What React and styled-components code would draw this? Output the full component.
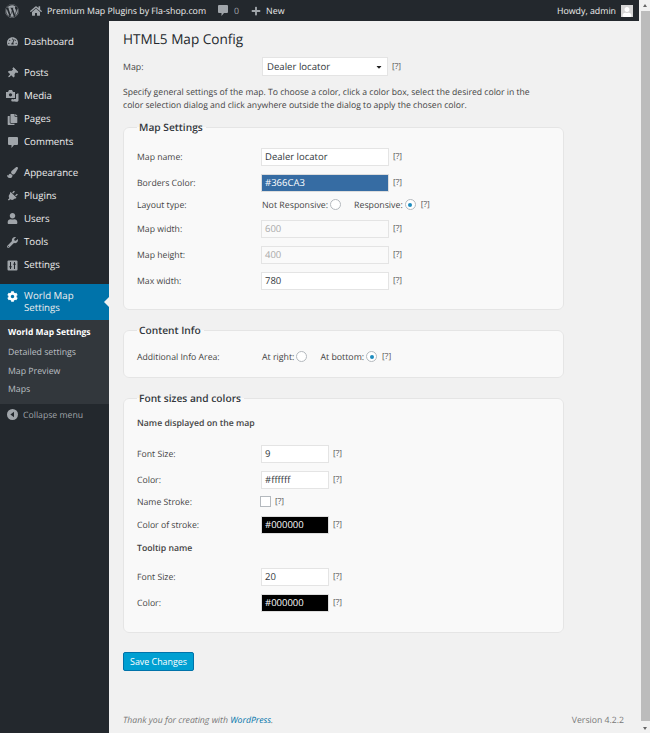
import React from 'react';
import styled, { createGlobalStyle } from 'styled-components';
import {
  FaWordpress,
  FaHome,
  FaPlus,
  FaTachometerAlt,
  FaThumbtack,
  FaCopy,
  FaPaintBrush,
  FaPlug,
  FaUser,
  FaWrench,
  FaCog,
  FaCaretDown,
} from 'react-icons/fa';

const GlobalStyle = createGlobalStyle`
  html, body {
    margin: 0;
    height: 733px;
    overflow: hidden;
    background: #f1f1f1;
  }
  * { box-sizing: border-box; }
  body {
    font-family: 'Open Sans', sans-serif;
    font-size: 9.5px;
    color: #444;
    text-rendering: geometricPrecision;
  }
`;

const Shell = styled.div`
  display: flex;
  width: 650px;
  height: 733px;
`;
const Page = styled.div`
  width: 639px;
  display: flex;
  flex-direction: column;
`;
const Scrollbar = styled.div`
  width: 11px;
  background: #f1f1f1;
  display: flex;
  flex-direction: column;
  align-items: center;
  padding: 4px 0 3px 1px;
`;
const ScrollArrow = styled.div`
  width: 0;
  height: 0;
  border-left: 2.5px solid transparent;
  border-right: 2.5px solid transparent;
  border-${(props) => (props.$down ? 'top' : 'bottom')}: 3px solid #666;
`;
const ScrollThumb = styled.div`
  flex: 1;
  width: 9px;
  margin: 4px 0 6px;
  background: #bcbcbc;
`;

const AdminBar = styled.header`
  height: 21px;
  background: #23282d;
  color: #eee;
  display: flex;
  align-items: center;
  padding: 0 6px 0 5px;
  font-size: 8.8px;
`;
const BarLogo = styled.span`
  display: flex;
  color: #a0a5aa;
  font-size: 14px;
  margin-right: 11px;
`;
const BarIcon = styled.span`
  display: flex;
  color: ${(props) => props.$color || '#a0a5aa'};
  font-size: ${(props) => props.$size || 11}px;
  margin-right: ${(props) => props.$gap || 5}px;
`;
const BarText = styled.span`
  color: ${(props) => props.$color || '#eee'};
  margin-right: ${(props) => props.$gap || 0}px;
`;
const BarRight = styled.div`
  margin-left: auto;
  display: flex;
  align-items: center;
  gap: 5px;
`;
const Avatar = styled.span`
  width: 12px;
  height: 12px;
  background: #d5d5d5;
  display: flex;
  align-items: flex-end;
  justify-content: center;
  color: #fff;
  font-size: 10px;
  overflow: hidden;
`;

const Body = styled.div`
  flex: 1;
  display: flex;
  min-height: 0;
`;
const Sidebar = styled.nav`
  width: 109px;
  background: #23282d;
  padding-top: 9px;
`;
const MenuGroup = styled.div`
  margin-bottom: ${(props) => props.$gap}px;
`;
const MenuItem = styled.div`
  position: relative;
  display: flex;
  align-items: ${(props) => (props.$active ? 'flex-start' : 'center')};
  height: ${(props) => (props.$active ? '36px' : '23.2px')};
  padding: ${(props) => (props.$active ? '6.5px 8px 0 6px' : '0 8px 0 6px')};
  background: ${(props) => (props.$active ? '#0073aa' : 'transparent')};
  color: #eee;
  font-size: 9.7px;
  line-height: 12px;
`;
const MenuIcon = styled.span`
  width: 13px;
  height: 12px;
  margin-right: 5px;
  flex: none;
  display: flex;
  align-items: center;
  justify-content: center;
  font-size: 11px;
  color: ${(props) => (props.$active ? '#fff' : '#a0a5aa')};
  transform: rotate(${(props) => props.$turn || 0}deg);
`;
const ActiveNotch = styled.span`
  position: absolute;
  right: 0;
  top: 13px;
  width: 0;
  height: 0;
  border-top: 5px solid transparent;
  border-bottom: 5px solid transparent;
  border-right: 5px solid #f1f1f1;
`;
const SubMenu = styled.div`
  background: #32373c;
  padding: 4.5px 0 5px;
`;
const SubItem = styled.div`
  height: 18.6px;
  line-height: 18.6px;
  padding-left: 8px;
  font-size: ${(props) => (props.$current ? 8.5 : 8.75)}px;
  font-weight: ${(props) => (props.$current ? 700 : 400)};
  color: ${(props) => (props.$current ? '#fff' : 'rgba(240, 245, 250, 0.72)')};
`;
const Collapse = styled.div`
  display: flex;
  align-items: center;
  gap: 5px;
  padding: 2px 0 0 7px;
  height: 20px;
  font-size: 8.7px;
  color: #a0a5aa;
`;

const Content = styled.main`
  flex: 1;
  display: flex;
  flex-direction: column;
  padding: 0 0 0 14px;
  min-width: 0;
`;
const Title = styled.h1`
  margin: 9px 0 0;
  font-size: 13.6px;
  line-height: 18px;
  font-weight: 400;
  color: #23282d;
`;
const MapRow = styled.div`
  display: flex;
  align-items: center;
  margin-top: 9px;
`;
const MapLabel = styled.span`
  width: 139px;
  font-size: 8.8px;
`;
const SelectBox = styled.div`
  width: 126px;
  height: 19px;
  background: #fff;
  border: 1px solid #e4e4e4;
  padding: 0 4px;
  display: flex;
  align-items: center;
  justify-content: space-between;
  font-size: 9.6px;
  color: #32373c;
`;
const Help = styled.span`
  margin-left: ${(props) => props.$gap || 4}px;
  font-size: 8.4px;
  color: #555;
`;
const Intro = styled.p`
  margin: 10px 0 0;
  width: 420px;
  line-height: 13.3px;
  font-size: 8.65px;
  color: #444;
`;
const Group = styled.fieldset`
  margin: ${(props) => props.$top}px 0 0;
  padding: ${(props) => props.$pad}px 14px 0 13px;
  width: 441px;
  height: ${(props) => props.$height}px;
  background: #f9f9f9;
  border: 1px solid #e5e5e5;
  border-radius: 6px;
`;
const GroupTitle = styled.legend`
  padding: 0 3px 0 2px;
  margin-left: 0;
  font-size: 10.2px;
  line-height: 13px;
  font-weight: 600;
  color: #32373c;
`;
const Row = styled.div`
  display: flex;
  align-items: center;
  height: ${(props) => props.$h || 26}px;
`;
const Label = styled.span`
  width: 124px;
  flex: none;
  font-size: 8.7px;
  color: #444;
`;
const Field = styled.div`
  width: ${(props) => (props.$small ? 68 : 128)}px;
  height: 18px;
  border: 1px solid ${(props) => (props.$swatch ? '#ddd' : '#e4e4e4')};
  background: ${(props) => props.$swatch || (props.$disabled ? '#fafafa' : '#fff')};
  color: ${(props) => (props.$swatch ? '#fff' : props.$disabled ? '#a9a9a9' : '#32373c')};
  font-size: 9.5px;
  line-height: 16px;
  padding-left: 3px;
  flex: none;
`;
const Choices = styled.div`
  display: flex;
  align-items: center;
  font-size: 8.8px;
  padding-left: 1px;
`;
const Choice = styled.span`
  display: flex;
  align-items: center;
  gap: 2px;
  margin-right: ${(props) => props.$gap || 0}px;
  color: #444;
`;
const Radio = styled.span`
  width: 11px;
  height: 11px;
  border-radius: 50%;
  border: 1px solid #b4b9be;
  background: #fff;
  display: flex;
  align-items: center;
  justify-content: center;
  &::after {
    content: '';
    width: 4px;
    height: 4px;
    border-radius: 50%;
    background: ${(props) => (props.$on ? '#1e8cbe' : 'transparent')};
  }
`;
const Checkbox = styled.span`
  width: 11px;
  height: 11px;
  margin-left: -1px;
  background: #fff;
  border: 1px solid #b4b9be;
  flex: none;
`;
const SubHeading = styled.div`
  font-size: 8.7px;
  font-weight: 600;
  color: #444;
  height: ${(props) => props.$h}px;
  line-height: 14px;
  padding-top: ${(props) => props.$pt || 0}px;
`;
const SaveButton = styled.button`
  align-self: flex-start;
  margin-top: 19px;
  width: 71px;
  height: 19px;
  padding: 0;
  font-family: inherit;
  font-size: 8.9px;
  color: #fff;
  background: #00a0d2;
  border: 1px solid #0073aa;
  border-radius: 2px;
`;
const Footer = styled.footer`
  margin-top: auto;
  display: flex;
  justify-content: space-between;
  padding: 0 15px 7px 0;
  font-size: 8.7px;
  line-height: 12px;
  color: #777;
`;
const Thanks = styled.span`
  font-style: italic;
`;
const FooterLink = styled.a`
  color: #0073aa;
`;

const SettingsGlyph = () => (
  <svg width="11" height="11" viewBox="0 0 11 11">
    <rect x="0.5" y="0.5" width="10" height="10" rx="1" fill="#a0a5aa" />
    <path d="M3.5 2v7M2.2 6.8h2.6M7.5 2v7M6.2 4.2h2.6" stroke="#23282d" strokeWidth="1" />
  </svg>
);

const CollapseGlyph = () => (
  <svg width="11" height="11" viewBox="0 0 11 11">
    <circle cx="5.5" cy="5.5" r="5.5" fill="#a0a5aa" />
    <path d="M7 2.8v5.4L3.4 5.5z" fill="#23282d" />
  </svg>
);

const MediaGlyph = () => (
  <svg width="13" height="12" viewBox="0 0 13 12">
    <path d="M0 2h2l1-2h3l1 2h2v6H0z" fill="#a0a5aa" />
    <circle cx="4.5" cy="4.8" r="1.6" fill="#23282d" />
    <path d="M6.5 11.5a1.3 1.3 0 1 1 1.3-1.3V9h3.2v1.4a1.3 1.3 0 1 1-1-1.3V4H11v-.5h1.5v7a1.4 1.4 0 0 1-2 .9" fill="#a0a5aa" />
  </svg>
);

const CommentGlyph = () => (
  <svg width="10" height="11" viewBox="0 0 10 11">
    <path d="M1 0h8a1 1 0 0 1 1 1v6a1 1 0 0 1-1 1H6l-2.5 3V8H1a1 1 0 0 1-1-1V1a1 1 0 0 1 1-1z" fill="#a0a5aa" />
  </svg>
);

const topGroups = [
  { gap: 8, items: [{ icon: <FaTachometerAlt />, label: 'Dashboard' }] },
  {
    gap: 7,
    items: [
      { icon: <FaThumbtack />, label: 'Posts', turn: 45 },
      { icon: <MediaGlyph />, label: 'Media' },
      { icon: <FaCopy />, label: 'Pages' },
      { icon: <CommentGlyph />, label: 'Comments' },
    ],
  },
  {
    gap: 7,
    items: [
      { icon: <FaPaintBrush />, label: 'Appearance' },
      { icon: <FaPlug />, label: 'Plugins', turn: 45 },
      { icon: <FaUser />, label: 'Users' },
      { icon: <FaWrench />, label: 'Tools' },
      { icon: <SettingsGlyph />, label: 'Settings' },
    ],
  },
];

const FieldRow = ({ label, value, small, swatch, disabled, h }) => (
  <Row $h={h}>
    <Label>{label}</Label>
    <Field $small={small} $swatch={swatch} $disabled={disabled}>
      {value}
    </Field>
    <Help>[?]</Help>
  </Row>
);

const App = () => {
  return (
    <Shell>
      <GlobalStyle />
      <Page>
        <AdminBar>
          <BarLogo>
            <FaWordpress />
          </BarLogo>
          <BarIcon $size={12}>
            <FaHome />
          </BarIcon>
          <BarText $gap={12}>Premium Map Plugins by Fla-shop.com</BarText>
          <BarIcon $gap={6}>
            <CommentGlyph />
          </BarIcon>
          <BarText $color="#a0a5aa" $gap={12}>
            0
          </BarText>
          <BarIcon $size={10} $gap={5}>
            <FaPlus />
          </BarIcon>
          <BarText>New</BarText>
          <BarRight>
            <BarText>Howdy, admin</BarText>
            <Avatar>
              <FaUser />
            </Avatar>
          </BarRight>
        </AdminBar>
        <Body>
          <Sidebar>
            {topGroups.map((group) => (
              <MenuGroup key={group.items[0].label} $gap={group.gap}>
                {group.items.map((item) => (
                  <MenuItem key={item.label}>
                    <MenuIcon $turn={item.turn}>{item.icon}</MenuIcon>
                    {item.label}
                  </MenuItem>
                ))}
              </MenuGroup>
            ))}
            <MenuItem $active>
              <MenuIcon $active>
                <FaCog />
              </MenuIcon>
              World Map
              <br />
              Settings
              <ActiveNotch />
            </MenuItem>
            <SubMenu>
              <SubItem $current>World Map Settings</SubItem>
              <SubItem>Detailed settings</SubItem>
              <SubItem>Map Preview</SubItem>
              <SubItem>Maps</SubItem>
            </SubMenu>
            <Collapse>
              <CollapseGlyph />
              Collapse menu
            </Collapse>
          </Sidebar>
          <Content>
            <Title>HTML5 Map Config</Title>
            <MapRow>
              <MapLabel>Map:</MapLabel>
              <SelectBox>
                Dealer locator
                <FaCaretDown size={8} color="#222" />
              </SelectBox>
              <Help>[?]</Help>
            </MapRow>
            <Intro>
              Specify general settings of the map. To choose a color, click a color box, select the
              desired color in the color selection dialog and click anywhere outside the dialog to
              apply the chosen color.
            </Intro>
            <Group $top={8} $height={189} $pad={8}>
              <GroupTitle>Map Settings</GroupTitle>
              <FieldRow label="Map name:" value="Dealer locator" h={30} />
              <FieldRow label="Borders Color:" value="#366CA3" swatch="#366ca3" h={22} />
              <Row $h={22}>
                <Label>Layout type:</Label>
                <Choices>
                  <Choice $gap={13}>
                    Not Responsive:
                    <Radio />
                  </Choice>
                  <Choice>
                    Responsive:
                    <Radio $on />
                  </Choice>
                  <Help $gap={5}>[?]</Help>
                </Choices>
              </Row>
              <FieldRow label="Map width:" value="600" disabled />
              <FieldRow label="Map height:" value="400" disabled />
              <FieldRow label="Max width:" value="780" />
            </Group>
            <Group $top={14} $height={54} $pad={4}>
              <GroupTitle>Content Info</GroupTitle>
              <Row $h={32}>
                <Label>Additional Info Area:</Label>
                <Choices>
                  <Choice $gap={13}>
                    At right:
                    <Radio />
                  </Choice>
                  <Choice>
                    At bottom:
                    <Radio $on />
                  </Choice>
                  <Help $gap={5}>[?]</Help>
                </Choices>
              </Row>
            </Group>
            <Group $top={14} $height={241} $pad={5}>
              <GroupTitle>Font sizes and colors</GroupTitle>
              <SubHeading $h={31} $pt={6}>
                Name displayed on the map
              </SubHeading>
              <FieldRow label="Font Size:" value="9" small />
              <FieldRow label="Color:" value="#ffffff" small />
              <Row $h={18}>
                <Label>Name Stroke:</Label>
                <Checkbox />
                <Help>[?]</Help>
              </Row>
              <FieldRow label="Color of stroke:" value="#000000" small swatch="#000" h={28} />
              <SubHeading $h={25} $pt={2}>
                Tooltip name
              </SubHeading>
              <FieldRow label="Font Size:" value="20" small />
              <FieldRow label="Color:" value="#000000" small swatch="#000" />
            </Group>
            <SaveButton>Save Changes</SaveButton>
            <Footer>
              <Thanks>
                Thank you for creating with <FooterLink>WordPress</FooterLink>.
              </Thanks>
              <span>Version 4.2.2</span>
            </Footer>
          </Content>
        </Body>
      </Page>
      <Scrollbar>
        <ScrollArrow />
        <ScrollThumb />
        <ScrollArrow $down />
      </Scrollbar>
    </Shell>
  );
};

export default App;
